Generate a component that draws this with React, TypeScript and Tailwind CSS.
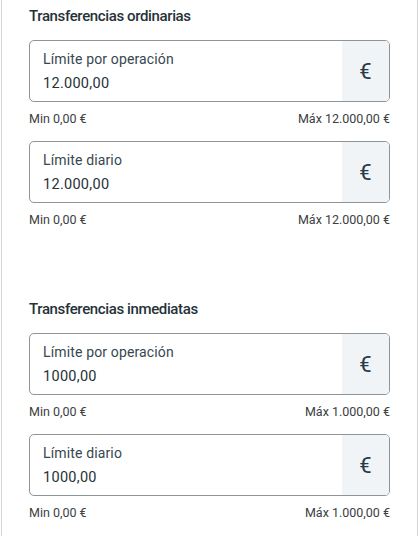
const font = "font-['Roboto','Noto_Sans',sans-serif]";

type Limit = { label: string; value: string; min: string; max: string };

const sections: { title: string; limits: Limit[] }[] = [
  {
    title: "Transferencias ordinarias",
    limits: [
      { label: "Límite por operación", value: "12.000,00", min: "Min 0,00 €", max: "Máx 12.000,00 €" },
      { label: "Límite diario", value: "12.000,00", min: "Min 0,00 €", max: "Máx 12.000,00 €" },
    ],
  },
  {
    title: "Transferencias inmediatas",
    limits: [
      { label: "Límite por operación", value: "1000,00", min: "Min 0,00 €", max: "Máx 1.000,00 €" },
      { label: "Límite diario", value: "1000,00", min: "Min 0,00 €", max: "Máx 1.000,00 €" },
    ],
  },
];

function LimitField({ limit }: { limit: Limit }) {
  return (
    <div className="flex flex-col">
      <div className="flex h-[62px] rounded-[5px] border border-[#8e9498] overflow-hidden bg-white">
        <div className="flex-1 flex flex-col justify-center pl-[13px] gap-[7px]">
          <span className="text-[14px] leading-[18px] tracking-[0.01em] text-[#37474f]">{limit.label}</span>
          <span className="text-[14.5px] leading-[18px] tracking-[0.02em] text-[#263238]">{limit.value}</span>
        </div>
        <div className="w-[47px] bg-[#f1f4f6] flex items-center justify-center">
          <span className="text-[22px] text-[#263a4a]">€</span>
        </div>
      </div>
      <div className="flex justify-between mt-[9px] text-[12.5px] leading-[16px] text-[#3c4043]">
        <span>{limit.min}</span>
        <span>{limit.max}</span>
      </div>
    </div>
  );
}

export default function App() {
  return (
    <div className={`w-[420px] h-[536px] bg-white overflow-hidden ${font}`}>
      <div className="h-full ml-[1px] mr-[2px] border-x border-[#d6d6d6] bg-white px-[27px] pt-[6px]">
        {sections.map((s, i) => (
          <section key={s.title} className={i > 0 ? "mt-[71px]" : ""}>
            <h2 className="text-[15px] leading-[20px] font-medium tracking-[-0.025em] text-[#263238]">{s.title}</h2>
            <div className="flex flex-col gap-[14px] mt-[14px]">
              {s.limits.map((l) => (
                <LimitField key={l.label} limit={l} />
              ))}
            </div>
          </section>
        ))}
      </div>
    </div>
  );
}
